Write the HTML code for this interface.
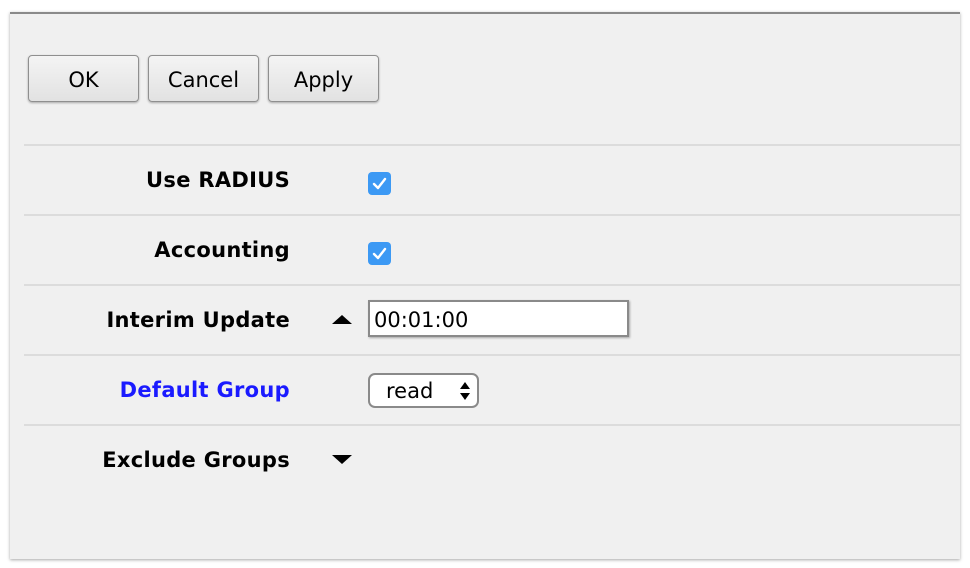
<!DOCTYPE html>
<html><head><style>
body{margin:0;width:970px;height:568px;background:#fff;position:relative;font-family:"DejaVu Sans","Liberation Sans",sans-serif;overflow:hidden}
.panel{position:absolute;left:10px;top:12px;width:950px;height:545px;background:#f0f0f0;border-top:2px solid #8a8a8a;box-shadow:0 1px 3px rgba(0,0,0,.35)}
.btn{position:absolute;top:55px;width:109px;height:45px;border:1px solid #8f8f8f;border-radius:4px;background:linear-gradient(#f4f4f4,#e2e2e2);box-shadow:0 1px 2px rgba(0,0,0,.3);font:21px "DejaVu Sans",sans-serif;color:#000;text-align:center;line-height:49px;box-sizing:content-box}
.sep{position:absolute;left:24px;width:936px;height:2px;background:#dcdcdc}
.lbl{position:absolute;right:680px;font:bold 21px "DejaVu Sans",sans-serif;letter-spacing:0.3px;color:#000;white-space:nowrap}
.cb{position:absolute;left:368px;width:23px;height:23px;border-radius:4px;background:#3c99f4}
.tri{position:absolute;left:332px;width:0;height:0;border-left:10px solid transparent;border-right:10px solid transparent}
</style></head><body>
<div class="panel"></div>
<div class="btn" style="left:28px">OK</div>
<div class="btn" style="left:148px">Cancel</div>
<div class="btn" style="left:268px">Apply</div>
<div class="sep" style="top:144px"></div>
<div class="sep" style="top:214px"></div>
<div class="sep" style="top:284px"></div>
<div class="sep" style="top:354px"></div>
<div class="sep" style="top:424px"></div>
<div class="lbl" style="top:168px">Use RADIUS</div>
<div class="lbl" style="top:238px">Accounting</div>
<div class="lbl" style="top:308px">Interim Update</div>
<div class="lbl" style="top:378px;color:#1a1aff">Default Group</div>
<div class="lbl" style="top:448px">Exclude Groups</div>
<div class="cb" style="top:172px"><svg width="23" height="23"><path d="M6 12l4 4 7-9" stroke="#fff" stroke-width="2.4" fill="none" stroke-linecap="round" stroke-linejoin="round"/></svg></div>
<div class="cb" style="top:242px"><svg width="23" height="23"><path d="M6 12l4 4 7-9" stroke="#fff" stroke-width="2.4" fill="none" stroke-linecap="round" stroke-linejoin="round"/></svg></div>
<div class="tri" style="top:315px;border-bottom:9px solid #000"></div>
<div class="tri" style="top:455px;border-top:9px solid #000"></div>
<div style="position:absolute;left:368px;top:300px;height:33px;border:2px solid #8a8a8a;background:#fff;font:21px 'DejaVu Sans',sans-serif;line-height:37px;padding-left:4px;box-sizing:content-box;width:253px;box-shadow:1px 1px 2px rgba(0,0,0,.3)">00:01:00</div>
<div style="position:absolute;left:368px;top:373px;width:107px;height:31px;border:2px solid #8a8a8a;border-radius:7px;background:#fff;font:21px 'DejaVu Sans',sans-serif;line-height:33px"><span style="position:absolute;left:16px">read</span>
<svg style="position:absolute;left:89px;top:6px" width="12" height="20"><path d="M1 8L6 1 11 8Z M1 12L6 19 11 12Z" fill="#000"/></svg></div>
</body></html>
